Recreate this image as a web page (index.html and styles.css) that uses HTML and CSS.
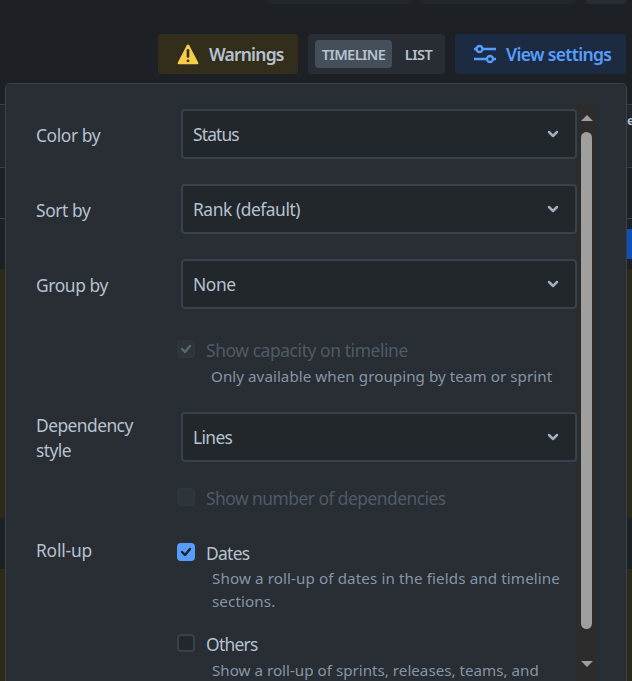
FILE: index.html
```html
<!DOCTYPE html>
<html lang="en">
<head>
<meta charset="utf-8">
<title>View settings</title>
<link rel="stylesheet" href="styles.css">
</head>
<body>
<main class="page">
  <div class="filters"><span class="filter"></span><span class="filter"></span><span class="filter filter-small"></span></div>
  <header class="toolbar">
    <button class="button warnings">
      <svg width="22" height="21" viewBox="0 0 22 21"><path d="M9.8 1.2Q11-.4 12.2 1.2L21.2 18.5Q21.8 20.3 20 20.3H2Q.2 20.3.8 18.5Z" fill="#f5cd47"/><path d="M11 6.2v6.3" stroke="#332e1b" stroke-width="2.6" stroke-linecap="round"/><circle cx="11" cy="16.8" r="1.4" fill="#332e1b"/></svg>
      <span>Warnings</span>
    </button>
    <div class="switcher"><button class="tab active">TIMELINE</button><button class="tab list">LIST</button></div>
    <button class="button settings">
      <svg width="24" height="20" viewBox="0 0 24 20" fill="none" stroke="#579dff" stroke-width="2.3"><path d="M1 5h2.5M9.5 5H23M1 15h13M20 15h3"/><circle cx="6.5" cy="5" r="3"/><circle cx="17" cy="15" r="3"/></svg>
      <span>View settings</span>
    </button>
  </header>
  <div class="timeline">
    <div class="row head"><span>e</span></div>
    <div class="row months"></div>
    <div class="row bar-row"><span class="bar"></span></div>
    <div class="row warn"></div>
    <div class="row gap"></div>
    <div class="row warn last"></div>
  </div>
  <section class="panel">
    <div class="fields">
      <div class="label">Color by</div>
      <div class="select"><span class="v-status">Status</span><svg class="chevron" width="12" height="8" viewBox="0 0 12 8"><path d="M2 2l4 4 4-4"/></svg></div>
      <div class="label">Sort by</div>
      <div class="select"><span class="v-rank">Rank (default)</span><svg class="chevron" width="12" height="8" viewBox="0 0 12 8"><path d="M2 2l4 4 4-4"/></svg></div>
      <div class="label">Group by</div>
      <div class="control group">
        <div class="select"><span>None</span><svg class="chevron" width="12" height="8" viewBox="0 0 12 8"><path d="M2 2l4 4 4-4"/></svg></div>
        <div class="option disabled"><span class="box"><svg width="12" height="10" viewBox="0 0 12 10"><path d="M2 5l3 3 5-6"/></svg></span><span>Show capacity on timeline</span></div>
        <p class="hint capacity-hint">Only available when grouping by team or sprint</p>
      </div>
      <div class="label two-line">Dependency style</div>
      <div class="control dependency">
        <div class="select"><span class="v-lines">Lines</span><svg class="chevron" width="12" height="8" viewBox="0 0 12 8"><path d="M2 2l4 4 4-4"/></svg></div>
        <div class="option disabled"><span class="box"></span><span class="number">Show number of dependencies</span></div>
      </div>
      <div class="label rollup">Roll-up</div>
      <div class="control rollups">
        <div class="option"><span class="box checked"><svg width="12" height="10" viewBox="0 0 12 10"><path d="M2 5l3 3 5-6"/></svg></span><span class="name">Dates</span></div>
        <p class="hint">Show a roll-up of dates in the fields and timeline<br>sections.</p>
        <div class="option others"><span class="box"></span><span class="name">Others</span></div>
        <p class="hint others-hint">Show a roll-up of sprints, releases, teams, and</p>
      </div>
    </div>
    <div class="scrollbar"><span class="arrow up"></span><span class="thumb"></span><span class="arrow down"></span></div>
  </section>
</main>
</body>
</html>
```

FILE: styles.css
```css
* { box-sizing: border-box; }
body { margin: 0; background: #1d2125; font-family: "Noto Sans", sans-serif; color: #b6c2cf; }
button { border: 0; font: inherit; color: inherit; padding: 0; }
svg { display: block; flex: none; }
p { margin: 0; }
.page { position: relative; width: 632px; height: 681px; overflow: hidden; }
.filters { display: flex; justify-content: flex-end; gap: 10px; height: 4px; padding-right: 6px; }
.filter { width: 155px; background: #22272b; border-radius: 0 0 4px 4px; }
.filter:first-child { width: 145px; }
.filter-small { width: 40px; background: #282d33; }
.toolbar { display: flex; gap: 10px; height: 100px; padding: 30px 6px 30px 158px; }
.button { display: flex; align-items: center; height: 40px; border-radius: 4px; font-size: 17.5px; font-weight: 600; white-space: nowrap; }
.warnings { width: 140px; padding-left: 19px; gap: 10px; background: #332e1b; letter-spacing: -.8px; }
.settings { width: 171px; padding-left: 18px; gap: 9px; background: #1c2b41; color: #579dff; letter-spacing: -.65px; }
.switcher { display: flex; width: 137px; height: 40px; padding: 6px 0 6px 7px; background: #282d33; border-radius: 4px; }
.tab { height: 28px; width: 77px; flex: none; border-radius: 4px; background: none; font-size: 14.6px; font-weight: 600; letter-spacing: -.6px; }
.tab.list { width: 53px; }
.tab.active { background: #454f59; }
.row { border-top: 1px solid #38414a; }
.head { height: 63px; background: #22272b; font-size: 13px; font-weight: 600; padding: 6px 0 0 627px; overflow: hidden; letter-spacing: -3px; }
.months { height: 51px; }
.bar-row { height: 51px; display: flex; justify-content: flex-end; padding-top: 10px; }
.bar { width: 6px; height: 30px; background: #0c50b8; }
.warn { height: 249px; background: #2e2a18; border: 0; }
.gap { height: 51px; border: 0; }
.last { height: 112px; }
.panel { position: absolute; left: 5px; top: 83px; width: 622px; height: 610px; display: flex; background: #292d34; border: 1px solid #38424c; border-radius: 5px; padding: 20px 0 0 30px; }
.fields { display: grid; grid-template-columns: 145px 396px; grid-template-rows: 75px 75px 153px 113px auto; align-content: start; padding-top: 5px; height: 577px; overflow: hidden; font-size: 17.4px; letter-spacing: -.4px; line-height: 25px; }
.label { padding-top: 14px; }
.two-line { padding-top: 1px; width: 110px; letter-spacing: -.55px; }
.rollup { padding-top: 13px; letter-spacing: -.2px; }
.v-status { letter-spacing: -.85px; }
.v-rank { letter-spacing: -.45px; }
.v-lines { letter-spacing: -.65px; }
.number { letter-spacing: -.52px; }
.name { letter-spacing: -.7px; }
.select { height: 50px; display: flex; align-items: center; justify-content: space-between; padding: 0 16px 0 10px; background: #22272b; border: 2px solid #38424a; border-radius: 4px; }
.select span { padding-top: 1px; }
.chevron { fill: none; stroke: #9fadbc; stroke-width: 2.5; stroke-linecap: round; stroke-linejoin: round; }
.option { display: flex; align-items: center; gap: 11px; margin-left: -4px; height: 26px; }
.box { width: 18px; height: 18px; border: 2px solid #38424a; border-radius: 4px; background: #22272b; display: flex; align-items: center; justify-content: center; position: relative; top: -1px; }
.box svg { fill: none; stroke: #1d2125; stroke-width: 2.4; stroke-linecap: round; stroke-linejoin: round; }
.checked { background: #579dff; border-color: #579dff; }
.disabled { color: #4f5b67; margin-top: 28px; }
.disabled .box { background: #2d343a; border-color: #2f363c; }
.disabled .box svg { stroke: #596773; }
.dependency .disabled { margin-top: 23px; }
.hint { color: #8696a7; font-size: 15.2px; letter-spacing: .1px; line-height: 23px; margin-left: 31px; margin-top: 1px; white-space: nowrap; }
.capacity-hint { margin-left: 30px; margin-top: 2px; letter-spacing: .04px; }
.rollups { padding-top: 15px; }
.others { margin-top: 18px; }
.others-hint { margin-top: 2px; letter-spacing: 0; }
.scrollbar { width: 19px; height: 577px; background: #2c2c2c; display: flex; flex-direction: column; align-items: center; padding-top: 11px; }
.arrow { border: 6px solid transparent; border-top: 0; border-bottom: 6px solid #9f9f9f; }
.thumb { width: 11px; height: 497px; margin-top: 11px; border-radius: 6px; background: #9f9f9f; }
.down { border-bottom: 0; border-top: 6px solid #9f9f9f; margin-top: 32px; }
```
